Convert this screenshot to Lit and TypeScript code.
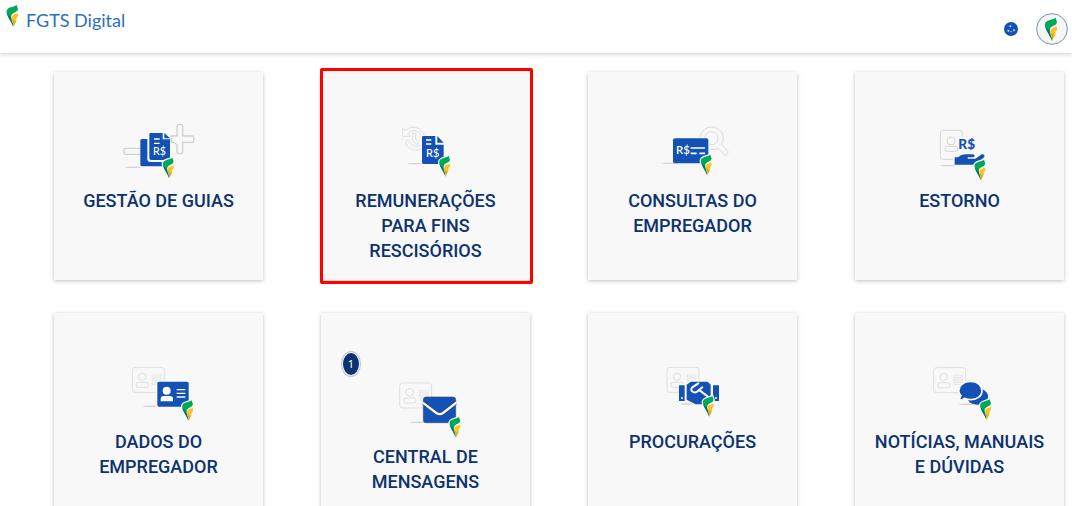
import { LitElement, html, svg, css, nothing } from "lit";
import type { SVGTemplateResult } from "lit";
import { customElement, property } from "lit/decorators.js";
import { classMap } from "lit/directives/class-map.js";

const BLUE = "#1351b4";
const PALE = "#dfdfdf";
const PAPER = "#f8f8f8";

const GREEN_WAVE = "M32 0C21 8 5 5 2 17C-1 31 15 46 22 66C22 54 13 42 16 32C19 22 33 24 36 13Z";
const YELLOW_WAVE = "M36 24C30 28 21 26 18 35C16 46 23 54 23 66C25 54 34 51 31 40C32 36 36 37 36 33Z";

const leafShapes = svg`
  <path d="${GREEN_WAVE}" fill="#00a859"/>
  <path d="M3 24C4 36 16 48 22 66C22 54 14 44 15 36C9 34 6 30 3 24Z" fill="#0b6f68"/>
  <path d="${YELLOW_WAVE}" fill="#fdc421"/>
  <path d="M17 38C17 47 23 54 23 66C24 59 27 55 29 50C23 48 19 44 17 38Z" fill="#e0a62a"/>`;

const leaf = (x: number, y: number) => svg`
  <g transform="translate(${x} ${y}) scale(.94)">
    <path d="${GREEN_WAVE}${YELLOW_WAVE}" fill="${PAPER}" stroke="${PAPER}" stroke-width="8" stroke-linejoin="round"/>
    ${leafShapes}
  </g>`;

const shade = (x: number, y: number) => svg`
  <ellipse cx="${x}" cy="${y}" rx="24" ry="2" fill="#d0d0d0"/>`;

const ghostCard = (x: number, y: number) => svg`
  <g transform="translate(${x} ${y})" fill="none" stroke="${PALE}" stroke-width="3">
    <rect width="96" height="75" rx="9"/>
    <circle cx="30" cy="28" r="11"/>
    <rect x="12" y="45" width="37" height="15" rx="7"/>
    <path d="M60 23H86V29H60ZM60 34H86V40H60ZM60 45H86V51H60Z" stroke-width="2"/>
  </g>`;

const currency = (x: number, y: number, size: number, fill: string, weight: number) => svg`
  <text x="${x}" y="${y}" font-family="Lato, sans-serif" font-size="${size}" font-weight="${weight}" fill="${fill}">R$</text>`;

const icons: Record<string, { box: string; art: SVGTemplateResult }> = {
  guias: {
    box: "24 36 243 180",
    art: svg`
      <path d="M90 115H46Q42 115 42 119V129Q42 133 46 133H90" fill="none" stroke="#d0d0d0" stroke-width="4"/>
      ${shade(70, 172)}
      <path d="M201 78V48Q201 43 206 43H213Q218 43 218 48V78H246Q251 78 251 82V93Q251 97 246 97H218V126Q218 131 213 131H206Q201 131 201 126V105L193 97H184V78Z" fill="${PAPER}" stroke="#d0d0d0" stroke-width="4"/>
      <path d="M96 87H112V147Q112 156 121 156H156V169H96Q91 169 91 164V92Q91 87 96 87Z" fill="${BLUE}"/>
      <path d="M121 69H158V88H180V144Q180 150 174 150H124Q118 150 118 144V72Q118 69 121 69Z" fill="${BLUE}"/>
      <path d="M163 69L180 85H163Z" fill="${BLUE}"/>
      <path d="M132 87H149M132 100H149" stroke="#fff" stroke-width="4"/>
      ${currency(129, 135, 32, "#fff", 500)}
      ${leaf(157, 143)}`,
  },
  rescisorios: {
    box: "-15 36 243 180",
    art: svg`
      <g fill="none" stroke="${PALE}" stroke-width="3">
        <path d="M47 61C67 43 96 53 103 76M38 55V79H62L54 71C66 55 90 61 93 79M47 98C54 119 79 126 95 116M57 91C62 108 78 113 94 106M47 98Q48 90 57 91M38 55L47 61"/>
        <path d="M68 70H77V89L87 98L81 103L68 93Z"/>
      </g>
      ${shade(76, 161)}
      <path d="M100 78H136V104H161V157Q161 162 156 162H101Q96 162 96 157V82Q96 78 100 78Z" fill="${BLUE}"/>
      <path d="M142 78L161 98H142Z" fill="${BLUE}"/>
      <path d="M108 90H124M108 102H124" stroke="#fff" stroke-width="4"/>
      ${currency(108, 141, 33, "#fff", 500)}
      ${leaf(146, 138)}`,
  },
  consultas: {
    box: "6 36 243 180",
    art: svg`
      <g fill="none" stroke="#d9d9d9" stroke-width="3">
        <path d="M151 80C153 55 184 43 205 57C224 71 223 89 214 102L234 125Q235 130 227 137L204 115Q194 121 179 118"/>
        <path d="M164 82C168 62 195 60 202 76C208 95 194 108 179 104"/>
      </g>
      ${shade(60, 160)}
      <rect x="69" y="85" width="106" height="75" rx="6" fill="${BLUE}"/>
      ${currency(78, 133, 34, "#fff", 600)}
      <path d="M122 114H165M122 130H140M148 130H165" stroke="#fff" stroke-width="5"/>
      ${leaf(151, 134)}`,
  },
  estorno: {
    box: "-3 36 243 180",
    art: svg`
      <g fill="none" stroke="#d4d4d4" stroke-width="3">
        <path d="M127 80V70Q127 61 118 61H70Q61 61 61 70V139Q61 148 70 148H98"/>
        <circle cx="93" cy="93" r="12"/>
        <rect x="75" y="109" width="38" height="15" rx="7"/>
      </g>
      ${shade(84, 167)}
      ${currency(115, 117, 41, BLUE, 900)}
      <path d="M104 142H114Q123 133 136 133H160Q168 137 160 142H143V146H166L185 133Q195 132 193 141L173 159Q167 164 157 164H104Z" fill="${BLUE}"/>
      ${leaf(162, 149)}`,
  },
  dados: {
    box: "9 24 243 180",
    art: svg`
      ${ghostCard(52, 37)}
      ${shade(107, 154)}
      <rect x="123" y="76" width="102" height="82" rx="8" fill="${PAPER}"/>
      <rect x="127" y="80" width="94" height="75" rx="5" fill="${BLUE}"/>
      <circle cx="155" cy="107" r="12" fill="#fff"/>
      <path d="M137 139V132Q137 123 146 123H165Q174 123 174 132V139Z" fill="#fff"/>
      <path d="M185 104H211M185 115H211M185 126H211" stroke="#fff" stroke-width="4"/>
      ${leaf(200, 136)}`,
  },
  mensagens: {
    box: "165 114 243 180",
    art: svg`
      ${ghostCard(209, 129)}
      ${shade(264, 247)}
      <rect x="280" y="171" width="97" height="77" rx="8" fill="${BLUE}" stroke="#444d5c" stroke-width="2"/>
      <path d="M279 188L319 219Q329 226 339 219L378 188" fill="none" stroke="#39455b" stroke-width="10"/>
      <path d="M278 188L319 219Q329 226 339 219L379 188" fill="none" stroke="${PAPER}" stroke-width="7"/>
      ${leaf(357, 231)}`,
  },
  procuracoes: {
    box: "6 24 243 180",
    art: svg`
      ${ghostCard(51, 37)}
      ${shade(113, 147)}
      <path d="M108 88L122 78H173L184 88V134L164 150H137L108 135Z" fill="${BLUE}" stroke="${PAPER}" stroke-width="4"/>
      <path d="M87 91H104V138H87ZM189 91H207V138H189Z" fill="${BLUE}"/>
      <circle cx="96" cy="129" r="3" fill="#fff"/>
      <circle cx="198" cy="129" r="3" fill="#fff"/>
      <path d="M145 85L127 97Q120 104 128 110Q133 115 141 110L157 97M149 106L183 132" fill="none" stroke="#fff" stroke-width="6" stroke-linecap="round"/>
      ${leaf(157, 123)}`,
  },
  noticias: {
    box: "12 24 243 180",
    art: svg`
      ${ghostCard(56, 38)}
      ${shade(155, 148)}
      <path d="M202 103C219 111 225 126 214 137L220 148Q207 149 201 147C184 152 166 148 159 136C182 135 200 122 202 103Z" fill="${BLUE}"/>
      <path d="M166 79C188 79 201 91 201 107C201 123 187 134 167 134Q156 134 149 130Q143 135 132 134L138 122C133 116 131 113 131 107C131 91 147 79 166 79Z" fill="${BLUE}" stroke="${PAPER}" stroke-width="5"/>
      ${leaf(194, 133)}`,
  },
};

interface Service {
  label: string;
  icon: string;
  notices?: number;
  highlighted?: boolean;
}

const services: Service[] = [
  { label: "GESTÃO DE GUIAS", icon: "guias" },
  { label: "REMUNERAÇÕES PARA FINS RESCISÓRIOS", icon: "rescisorios", highlighted: true },
  { label: "CONSULTAS DO EMPREGADOR", icon: "consultas" },
  { label: "ESTORNO", icon: "estorno" },
  { label: "DADOS DO EMPREGADOR", icon: "dados" },
  { label: "CENTRAL DE MENSAGENS", icon: "mensagens", notices: 1 },
  { label: "PROCURAÇÕES", icon: "procuracoes" },
  { label: "NOTÍCIAS, MANUAIS E DÚVIDAS", icon: "noticias" },
];

@customElement("service-card")
export class ServiceCard extends LitElement {
  @property({ attribute: false }) service!: Service;

  static styles = css`
    :host {
      display: block;
      position: relative;
    }
    .card {
      box-sizing: border-box;
      display: flex;
      flex-direction: column;
      align-items: center;
      gap: 6px;
      min-height: 208px;
      height: 100%;
      padding: 50px 14px 16px;
      background: #f8f8f8;
      box-shadow: 0 1px 4px rgba(0, 0, 0, 0.25);
      color: #0c326f;
      font: 500 18px/25px Roboto, sans-serif;
      text-align: center;
      text-decoration: none;
    }
    .with-notices {
      padding-top: 65px;
    }
    .highlighted::after {
      content: "";
      position: absolute;
      inset: -4px -3px -4px -1px;
      border: 3px solid #f00;
      border-radius: 2px;
    }
    .icon {
      flex: none;
      width: 81px;
      height: 60px;
    }
    .badge {
      position: absolute;
      top: 39px;
      left: 21px;
      width: 16px;
      height: 22px;
      border: 1px solid #f8f8f8;
      border-radius: 50%;
      outline: 1px solid #b9c5da;
      background: #0c326f;
      color: #fff;
      font: 400 11px/22px "Noto Sans", sans-serif;
    }
  `;

  render() {
    const { label, icon, notices, highlighted } = this.service;
    const { box, art } = icons[icon];
    return html`
      <a
        href="#${icon}"
        class=${classMap({ card: true, highlighted: !!highlighted, "with-notices": !!notices })}
      >
        ${notices ? html`<span class="badge">${notices}</span>` : nothing}
        <svg class="icon" viewBox=${box} aria-hidden="true">${art}</svg>
        <span>${label}</span>
      </a>
    `;
  }
}

@customElement("app-root")
export class AppRoot extends LitElement {
  static styles = css`
    :host {
      display: block;
      height: 100vh;
      overflow: hidden;
      background: #fff;
      font-family: Lato, sans-serif;
    }
    .header {
      box-sizing: border-box;
      display: flex;
      justify-content: space-between;
      height: 53px;
      padding: 5px 4px 0 6px;
      box-shadow: 0 1px 5px rgba(0, 0, 0, 0.2);
    }
    .brand {
      display: flex;
      align-items: flex-start;
      gap: 8px;
      color: #2a70c2;
      font-size: 18px;
      line-height: 30px;
      text-decoration: none;
    }
    .brand-mark {
      width: 12px;
      height: 22px;
    }
    .tools {
      display: flex;
      align-items: center;
      gap: 18px;
    }
    .tool {
      display: grid;
      place-items: center;
      padding: 0;
      border: 0;
      background: none;
      cursor: pointer;
    }
    .cookie {
      width: 14px;
      height: 14px;
    }
    .avatar {
      width: 32px;
      height: 32px;
    }
    .services {
      display: grid;
      grid-template-columns: repeat(4, 1fr);
      gap: 33px 58px;
      margin: 0;
      padding: 19px 8px 34px 54px;
      list-style: none;
    }
    .slot {
      display: grid;
    }
  `;

  render() {
    return html`
      <header class="header">
        <a class="brand" href="#inicio">
          <svg class="brand-mark" viewBox="0 0 36 66" aria-hidden="true">${leafShapes}</svg>
          <span>FGTS Digital</span>
        </a>
        <div class="tools">
          <button class="tool" type="button" aria-label="Cookies">
            <svg class="cookie" viewBox="0 0 42 42" aria-hidden="true">
              <circle cx="21" cy="21" r="21" fill="${BLUE}" />
              <g fill="#cfe0ff">
                <circle cx="19" cy="13" r="3" />
                <circle cx="13" cy="26" r="3" />
                <circle cx="30" cy="25" r="3" />
                <circle cx="21" cy="29" r="2" />
              </g>
            </svg>
          </button>
          <button class="tool" type="button" aria-label="Perfil">
            <svg class="avatar" viewBox="0 0 96 96" aria-hidden="true">
              <circle cx="48" cy="48" r="46" fill="#f6f6f6" stroke="#6f93b0" stroke-width="3" />
              <g transform="translate(25 14) scale(1.06)">${leafShapes}</g>
            </svg>
          </button>
        </div>
      </header>
      <main>
        <ul class="services">
          ${services.map(
            (service) => html`<li class="slot"><service-card .service=${service}></service-card></li>`
          )}
        </ul>
      </main>
    `;
  }
}
